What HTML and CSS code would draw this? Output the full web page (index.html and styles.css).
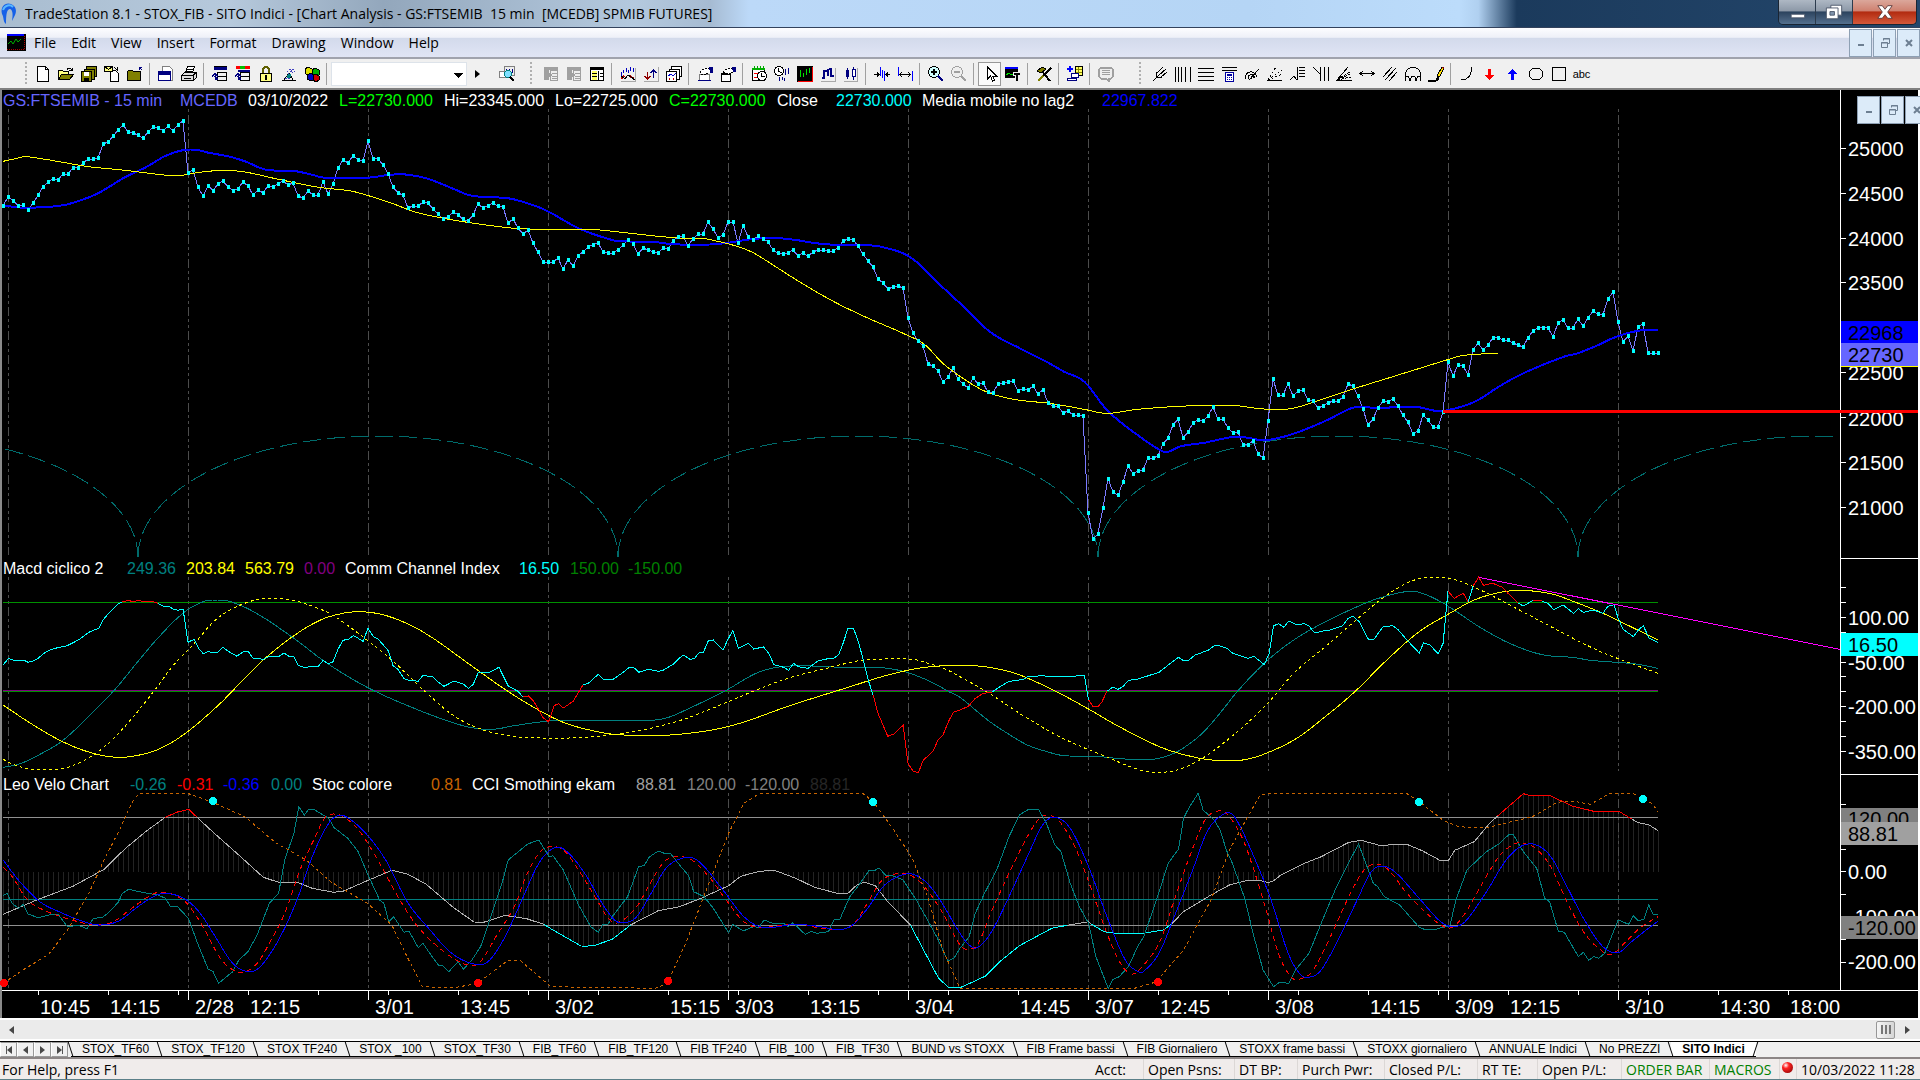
FILE: index.html
```html
<!DOCTYPE html>
<html lang="en">
<head>
<meta charset="utf-8">
<title>TradeStation 8.1 - STOX_FIB - SITO Indici</title>
<link rel="stylesheet" href="styles.css">
</head>
<body>
<svg class="defs" aria-hidden="true">
  <symbol id="new" viewBox="0 0 16 16"><path d="M2.5.5h8l3 3v12h-11z" fill="#fff" stroke="#000"/><path d="M10.5.5v3h3" fill="none" stroke="#000"/></symbol>
  <symbol id="open" viewBox="0 0 16 16"><path d="M.5 13.500v-9h4l1 1h5v3" fill="#ffff80" stroke="#000"/><path d="M.5 13.500l3-5h12l-4 5z" fill="#808000" stroke="#000"/><path d="M9 3.500c2-2 4-1 5 1m0-3v3h-3" fill="none" stroke="#000"/></symbol>
  <symbol id="saveall" viewBox="0 0 16 16"><path d="M5.500.5h10v10h-10z" fill="#808000" stroke="#000"/><path d="M3 3h10v10h-10z" fill="#808000" stroke="#000"/><path d="M.5 5.500h10v10h-10z" fill="#808000" stroke="#000"/><path d="M3 6h5v4h-5z" fill="#fff"/><path d="M3 12h5v3h-5z" fill="#000"/></symbol>
  <symbol id="mail" viewBox="0 0 16 16"><path d="M6.500 4.500h5l3 3v8h-8z" fill="#fff" stroke="#000"/><path d="M.5.5h8v5h-8z" fill="#ffff80" stroke="#000"/><path d="M.5.5l4 3 4-3M10 1l3 3v-3" fill="none" stroke="#000"/></symbol>
  <symbol id="folder" viewBox="0 0 16 16"><path d="M.5 5.500l1-1h4l1 1h7v9h-13z" fill="#808000" stroke="#000"/><path d="M15 4l-3-3m0 3v-3h3" fill="none" stroke="#000080"/></symbol>
  <symbol id="window" viewBox="0 0 16 16"><path d="M4.500.5h7l3 3v11h-10z" fill="#fff" stroke="#808080"/><path d="M.5 5.500h12v9h-12z" fill="#fff" stroke="#000080"/><path d="M1 6h12v3h-12z" fill="#000080"/></symbol>
  <symbol id="print" viewBox="0 0 16 16"><path d="M4.500 6.500l2-6h7l-2 6z" fill="#fff" stroke="#000"/><path d="M.5 9.500l3-3h12v5l-3 3h-12z" fill="#ddd" stroke="#000"/><path d="M1 9.500h11l3-3m-3 3v5M6 3h6M5 5h6M3 12h7" fill="none" stroke="#000"/></symbol>
  <symbol id="sheet" viewBox="0 0 16 16"><path d="M2 1h13v3h-13z" fill="#000080"/><path d="M2 .5h13M5.500 6.500h9v8h-9zM6 10.500h8" fill="none" stroke="#000"/><path d="M6 12.500h-2l-1-3m-3 1l3-3 3 3" fill="none" stroke="#000080" stroke-width="2"/></symbol>
  <symbol id="sheetc" viewBox="0 0 16 16"><path d="M1 0h4v3h-4zm9 0h5v3h-5z" fill="red"/><path d="M5 0h5v3h-5z" fill="#00c000"/><path d="M3 4h12v2h-12z" fill="#000080"/><path d="M5.500 6.500h9v8h-9zM6 10.500h8" fill="none" stroke="#000"/><path d="M6 12.500h-2l-1-3m-3 1l3-3 3 3" fill="none" stroke="#000080" stroke-width="2"/></symbol>
  <symbol id="lock" viewBox="0 0 16 16"><path d="M5 8v-5q3-4 6 0v5" fill="none" stroke="#606000" stroke-width="2"/><path d="M2.500 7.500h11v8h-11z" fill="#ffff80" stroke="#000"/><path d="M7 9h2v5h-2z"/></symbol>
  <symbol id="sat" viewBox="0 0 16 16"><path d="M1 14.500h14M3 14l5-7 4 7M6 11h5" fill="none" stroke="#000"/><path d="M6 6l5-4m-4 6l7-6m-6 7l6-4M4 12l5 1" stroke="#4040c0" stroke-dasharray="2 1"/><circle cx="8" cy="10" r="2" fill="#008080"/></symbol>
  <symbol id="cubes" viewBox="0 0 16 16"><path d="M1 3l3-2 4 2v5l-4 2-3-3z" fill="#e0e000" stroke="#000"/><path d="M8 4l3-2 4 2v5l-4 1-3-2z" fill="#00b000" stroke="#000"/><path d="M3 9l4-2 3 2v5l-3 1-4-2z" fill="#0000c0" stroke="#000"/><path d="M9 9l3-1 3 2v4l-3 2-3-2z" fill="#d00000" stroke="#000"/></symbol>
  <symbol id="find" viewBox="0 0 16 16"><path d="M5.500.5h10v9h-10z" fill="#eee" stroke="#808080"/><path d="M.5 5.500h7v6h-7z" fill="#fff" stroke="#808080"/><path d="M7 3v3m3-3v3m3-3v4" stroke="#000080"/><circle cx="9" cy="8" r="3.500" fill="#80e0ff" stroke="#008080"/><path d="M11 11l4 4" stroke="#000" stroke-width="2"/></symbol>
  <symbol id="gbox" viewBox="0 0 16 16"><path d="M1 1h14v3h-14zM1 4h5v10h-5z" fill="#a0a0a0"/><path d="M7.500 4.500h7v10h-7z" fill="#eee" stroke="#a0a0a0"/><path d="M4 6l4 3-4 3" fill="none" stroke="#a0a0a0" stroke-width="2"/><path d="M9 7.500h5M9 10.500h5M9 12.500h5" stroke="#a0a0a0"/></symbol>
  <symbol id="table" viewBox="0 0 16 16"><path d="M1.500 1.500h13v13h-13z" fill="#fff" stroke="#000"/><path d="M2 2h12v2h-12z"/><path d="M3 5h5v9h-5z" fill="#ffff60"/><path d="M3 7.500h5M3 10.500h5M9.500 5v9M11 7.500h3M11 10.500h3" stroke="#000"/></symbol>
  <symbol id="wave" viewBox="0 0 16 16"><path d="M15.500 2v13.500H1" fill="none" stroke="#aaa"/><path d="M1.500 6v4M3.500 4v3M6.500 2v4M8.500 4v3M10.500 1v4M13.500 2v4" stroke="#0000c0"/><path d="M1 13l3-3M10 10l4 3" stroke="#c00000" stroke-width="2"/><path d="M1 10l4 3 3-4 3 2 4 3" fill="none" stroke="#000"/></symbol>
  <symbol id="updn" viewBox="0 0 16 16"><path d="M15.500 1v14.500H1" fill="none" stroke="#aaa"/><path d="M4.500 6v7m-3-3l3 3 3-3" fill="none" stroke="#900000"/><path d="M10.500 12v-8m-3 3l3-3 3 3" fill="none" stroke="#000080"/></symbol>
  <symbol id="stack" viewBox="0 0 16 16"><path d="M5.500.5h10v10h-10z" fill="#fff" stroke="#000"/><path d="M3.500 3.500h10v10h-10z" fill="#fff" stroke="#000"/><path d="M.5 5.500h10v10h-10z" fill="#fff" stroke="#000"/><path d="M2 10l3-2 2 2 3-3" fill="none" stroke="#0000d0"/><path d="M3.500 14v-2m4 0v2" stroke="#c00000"/></symbol>
  <symbol id="hand" viewBox="0 0 16 16"><path d="M2.500 8.500h10v6h-10z" fill="#fff" stroke="#808080"/><path d="M3 6l5-4h5v5l-4 1h-5z" fill="#fff" stroke="#000" stroke-dasharray="2 1"/><path d="M12 1h4v6h-3z" fill="#000080"/><path d="M1 14h13v1h-13z" fill="#000080"/></symbol>
  <symbol id="hand2" viewBox="0 0 16 16"><path d="M1.500 7.500h9v8h-9z" fill="#fff" stroke="#000"/><path d="M2 7h9v2h-9z"/><path d="M3 6l5-4h5v4l-4 2z" fill="#fff" stroke="#000" stroke-dasharray="2 1"/><path d="M12 1h4v5h-3z" fill="#000080"/></symbol>
  <symbol id="cal" viewBox="0 0 16 16"><path d="M1.500 3.500h12v11h-12z" fill="#fff" stroke="#000"/><path d="M1 2h13v2h-13z" fill="#00b000"/><path d="M3.500 0v3M6.500 0v3M9.500 0v3M12.500 0v3" stroke="#0a0"/><path d="M3 7h3v4h-3" fill="none" stroke="red"/><circle cx="11" cy="10" r="4.500" fill="#fff" stroke="#000"/><path d="M10.500 7v3h3" fill="none" stroke="#000"/></symbol>
  <symbol id="clock" viewBox="0 0 16 16"><circle cx="5" cy="5" r="4.500" fill="#fff" stroke="#000"/><path d="M4.500 2v3l3 2" fill="none" stroke="#000"/><path d="M11.500 3v6M14.500 2v6M5.500 11v4M8.500 11v3M10.500 12v3" stroke="#000080"/></symbol>
  <symbol id="chart" viewBox="0 0 16 16"><path d="M0 0h16v16h-16z"/><path d="M3.500 4v7M6.500 7v4M9.500 3v6M12.500 2v5" stroke="#00e000"/><path d="M15.500 1v14.500H1" fill="none" stroke="red"/></symbol>
  <symbol id="bars" viewBox="0 0 16 16"><path d="M15.500 2v13.500H1" fill="none" stroke="#aaa"/><path d="M4 4v9M2 12h2m0-7h3M8 3v7M11 2v9M9 3h2m0 7h3" fill="none" stroke="#000080" stroke-width="2"/></symbol>
  <symbol id="candle" viewBox="0 0 16 16"><path d="M14.500 2v13.500H1" fill="none" stroke="#aaa"/><path d="M3 4h3v7h-3z" fill="#000080"/><path d="M4.500 2v11M10.500 1v13" stroke="#000080"/><path d="M9.500 3.500h3v7h-3z" fill="#fff" stroke="#000080"/></symbol>
  <symbol id="narrow" viewBox="0 0 16 16"><path d="M0 8.500h5m-2-2l2 2-2 2M16 8.500h-4m2-2l-2 2 2 2" fill="none" stroke="#000"/><path d="M6.500 1v9M8.500 4v8M10.500 5v10" stroke="#0000ff"/></symbol>
  <symbol id="widen" viewBox="0 0 16 16"><path d="M3 8.500h10M5 6l-2 2.500 2 2.500M11 6l2 2.500-2 2.500" fill="none" stroke="#000"/><path d="M1.500 1v9M15.500 5v10" stroke="#0000ff"/></symbol>
  <symbol id="zin" viewBox="0 0 16 16"><circle cx="6" cy="6" r="5.500" fill="#d0ffff" stroke="#000"/><path d="M3 6h6M6 3v6" stroke="#000" stroke-width="2"/><path d="M10 10l5 5" stroke="#000080" stroke-width="2"/></symbol>
  <symbol id="zout" viewBox="0 0 16 16"><circle cx="6" cy="6" r="5.500" fill="#eee" stroke="#a0a0a0"/><path d="M3 6h6M10 10l5 5" stroke="#a0a0a0" stroke-width="2"/></symbol>
  <symbol id="arrow" viewBox="0 0 16 16"><path d="M5.500 1v12l3-3 2 5 2-1-2-4h4z" fill="#fff" stroke="#000"/></symbol>
  <symbol id="text" viewBox="0 0 16 16"><path d="M0 1h13v11h-13z"/><path d="M0 1h13v2h-13z" fill="#00f"/><path d="M1 9l3-2 2 2 3-1" fill="none" stroke="#0d0"/><path d="M8.500 6.500h7v3h-2v6h-3v-6h-2z" stroke="#eee"/></symbol>
  <symbol id="tools" viewBox="0 0 16 16"><path d="M5 4l9 11" stroke="#000" stroke-width="2"/><path d="M1 5l5-4 4 2-5 4z" fill="#808000" stroke="#000"/><path d="M15 2l-8 8" stroke="#000" stroke-width="2"/><path d="M7 10l-5 5" stroke="#808000" stroke-width="2"/></symbol>
  <symbol id="add" viewBox="0 0 16 16"><path d="M8.500.5h7v9h-7z" fill="#ffff60" stroke="#000"/><path d="M9 3.500h6M9 6.500h6M11.500 1v8" stroke="#880"/><path d="M0 3h6M3 0v6" stroke="#00f" stroke-width="2"/><path d="M4.500 7.500h7v4h-7zM.5 12.500h9v2h-9z" fill="#fff" stroke="#000080"/></symbol>
  <symbol id="note" viewBox="0 0 16 16"><path d="M3 1.500h10l2 2v7l-2 2h-2v3l-3-3h-5l-2-2v-7z" fill="#eee" stroke="#a0a0a0" stroke-width="2"/><path d="M4 4.500h8M4 6.500h8M4 8.500h8" stroke="#a0a0a0"/></symbol>
  <symbol id="fork" viewBox="0 0 16 16"><path d="M1 15l5-5M4 6l1 5 5 0M5 7l6-6M6 10l8-7M9 11l6-5" fill="none" stroke="#000"/></symbol>
  <symbol id="vlines" viewBox="0 0 16 16"><path d="M.5 1v15M3.500 1v15M6.500 1v15M10.500 1v15M15.500 1v15" stroke="#000"/></symbol>
  <symbol id="hlines" viewBox="0 0 16 16"><path d="M0 2.500h16M0 6.500h16M0 10.500h16M0 14.500h16" stroke="#000"/></symbol>
  <symbol id="calc" viewBox="0 0 16 16"><path d="M1 1.500h15M1 4.500h15" stroke="#000"/><path d="M4.500 6.500h8v9h-8z" fill="#fff" stroke="#0000a0"/><path d="M6 8h5v2h-5z" fill="#0000a0"/><path d="M6 11.500h1m1 0h1m1 0h1M6 13.500h1m1 0h1m1 0h1" stroke="#0000a0"/></symbol>
  <symbol id="arcs" viewBox="0 0 16 16"><path d="M1 13c0-8 9-10 12-2M4 13c0-5 5-6 7-1M7 13c0-3 2-3 3-1M5 14l10-11" fill="none" stroke="#000"/></symbol>
  <symbol id="fan" viewBox="0 0 16 16"><path d="M0 14.500h15" stroke="#000"/><path d="M1 14l8-13M1 14l14-10M1 14l14-6" stroke="#000" stroke-dasharray="2 2"/></symbol>
  <symbol id="retr" viewBox="0 0 16 16"><path d="M0 14l4-4 3 4M7.500 14v-13M9 1.500h6M9 4.500h6M9 7.500h6M9 10.500h6" fill="none" stroke="#000"/></symbol>
  <symbol id="tzone" viewBox="0 0 16 16"><path d="M0 1l7 7M7.500 1v14M11.500 1v14M15.500 1v14" stroke="#000"/></symbol>
  <symbol id="gann" viewBox="0 0 16 16"><path d="M0 14.500h16M1 14l11-13" stroke="#000"/><path d="M1 14l13-6M1 14l14-9M1 14l14-3" stroke="#000" stroke-dasharray="3 1"/></symbol>
  <symbol id="hext" viewBox="0 0 16 16"><path d="M2 7.500h12M4 5l-3 2.500 3 2.500M12 5l3 2.500-3 2.500" fill="none" stroke="#000"/></symbol>
  <symbol id="chan" viewBox="0 0 16 16"><path d="M1 11l9-10M3 14l11-12M7 15l8-9" stroke="#000"/></symbol>
  <symbol id="cycle" viewBox="0 0 16 16"><path d="M.5 15v-7c1-9 14-9 15 0v7M1 11q3-2 4 4 1-5 3-5 3 0 3 5 1-6 4-4" fill="none" stroke="#000"/></symbol>
  <symbol id="pencil" viewBox="0 0 16 16"><path d="M0 14.500h8l3-2" fill="none" stroke="#000" stroke-width="2"/><path d="M9 12l1-4 4-7 2 1-4 8z" fill="#ffe000" stroke="#000"/><path d="M13 1h3v3z" fill="#800000"/></symbol>
  <symbol id="arc" viewBox="0 0 16 16"><path d="M2 13.500c7 1 10-4 11-12" fill="none" stroke="#000"/></symbol>
  <symbol id="dn" viewBox="0 0 16 16"><path d="M6 3h3v6h3l-4.500 5-4.500-5h3z" fill="red"/></symbol>
  <symbol id="up" viewBox="0 0 16 16"><path d="M6 14h3v-6h3l-4.500-5-4.500 5h3z" fill="#00f"/></symbol>
  <symbol id="circ" viewBox="0 0 16 16"><ellipse cx="8" cy="8" rx="7" ry="6" fill="none" stroke="#000"/></symbol>
  <symbol id="rect" viewBox="0 0 16 16"><path d="M1.500 1.500h13v13h-13z" fill="none" stroke="#000"/></symbol>
  <symbol id="min" viewBox="0 0 16 16"><path d="M5 9h6v2h-6z" fill="#6d7f92"/></symbol>
  <symbol id="rest" viewBox="0 0 16 16"><path d="M6.500 5.500v-2h6v5h-2M6 4h7" fill="none" stroke="#6d7f92"/><path d="M4.500 7.500h6v5h-6zM4 8h7" fill="none" stroke="#6d7f92"/></symbol>
  <symbol id="close" viewBox="0 0 16 16"><path d="M5 5l6 6M11 5l-6 6" stroke="#6d7f92" stroke-width="2"/></symbol>
</svg>

<header class="titlebar">
  <svg class="logo" viewBox="0 0 18 24"><path d="M2 12C0 4 6 0 11 2c5 2 6 7 4 11l-3 6c1-6 1-11-2-12-3 0-4 5-4 15-3-2-2-7-4-10z" fill="#1560e8"/><path d="M3 8c2-5 7-6 10-3" fill="none" stroke="#59b8ff" stroke-width="2"/></svg>
  <h1 class="title">TradeStation 8.1 - STOX_FIB - SITO Indici - [Chart Analysis - GS:FTSEMIB&nbsp; 15 min&nbsp; [MCEDB] SPMIB FUTURES]</h1>
  <div class="wincontrols">
    <button class="wc" aria-label="Minimize"><svg viewBox="0 0 20 20"><path d="M3.500 12.500h15v4h-15z" fill="#fff" stroke="#4a5568"/></svg></button>
    <button class="wc" aria-label="Restore"><svg viewBox="0 0 20 20"><path d="M6.500 2.500h12v11h-12z" fill="#fff" stroke="#4a5568"/><path d="M1.500 5.500h13v12h-13z" fill="#fff" stroke="#4a5568"/><path d="M5.500 9.500h5v4h-5z" fill="#8095ad" stroke="#4a5568"/></svg></button>
    <button class="wc wc-close" aria-label="Close"><svg viewBox="0 0 20 20"><path d="M2 3h5l3 4 3-4h5l-5 7 5 7h-5l-3-4-3 4h-5l5-7z" fill="#fff" stroke="#5a3a3a"/></svg></button>
  </div>
</header>

<nav class="menubar">
  <svg class="docicon" viewBox="0 0 19 17"><path d="M0 0h19v17h-19z"/><path d="M0 0h17v2h-17z" fill="#00f"/><path d="M1 10l3-3 2 3 3-5 2 3 3-3" fill="none" stroke="#0a0"/><path d="M17.500 2v13.500H0" fill="none" stroke="#a00" stroke-dasharray="1 1"/></svg>
  <button class="menu">File</button><button class="menu">Edit</button><button class="menu">View</button><button class="menu">Insert</button><button class="menu">Format</button><button class="menu">Drawing</button><button class="menu">Window</button><button class="menu">Help</button>
  <div class="mdi">
    <button aria-label="Minimize chart"><svg><use href="#min"/></svg></button><button aria-label="Restore chart"><svg><use href="#rest"/></svg></button><button aria-label="Close chart"><svg><use href="#close"/></svg></button>
  </div>
</nav>

<div class="toolbar">
  <i class="grip first"></i>
  <button><svg><use href="#new"/></svg></button><button><svg><use href="#open"/></svg></button><button><svg><use href="#saveall"/></svg></button><button><svg><use href="#mail"/></svg></button><button><svg><use href="#folder"/></svg></button><i class="sep"></i>
  <button><svg><use href="#window"/></svg></button><button><svg><use href="#print"/></svg></button><i class="sep"></i>
  <button><svg><use href="#sheet"/></svg></button><button><svg><use href="#sheetc"/></svg></button><button><svg><use href="#lock"/></svg></button><button><svg><use href="#sat"/></svg></button><button><svg><use href="#cubes"/></svg></button><i class="sep"></i>
  <select class="symbol" aria-label="Symbol"><option></option></select>
  <button class="go" aria-label="Go"><i class="tri"></i></button>
  <button class="wide"><svg><use href="#find"/></svg></button><i class="grip mid"></i>
  <button><svg><use href="#gbox"/></svg></button><button><svg><use href="#gbox"/></svg></button><button><svg><use href="#table"/></svg></button><i class="sep"></i>
  <button><svg><use href="#wave"/></svg></button><button><svg><use href="#updn"/></svg></button><button><svg><use href="#stack"/></svg></button><i class="sep"></i>
  <button><svg><use href="#hand"/></svg></button><button><svg><use href="#hand2"/></svg></button><i class="sep"></i>
  <button><svg><use href="#cal"/></svg></button><button><svg><use href="#clock"/></svg></button><button><svg><use href="#chart"/></svg></button><button><svg><use href="#bars"/></svg></button><button><svg><use href="#candle"/></svg></button><i class="sep"></i>
  <button><svg><use href="#narrow"/></svg></button><button><svg><use href="#widen"/></svg></button><i class="sep"></i>
  <button><svg><use href="#zin"/></svg></button><button><svg><use href="#zout"/></svg></button><i class="sep"></i>
  <button class="pressed"><svg><use href="#arrow"/></svg></button><button><svg><use href="#text"/></svg></button><i class="sep"></i>
  <button><svg><use href="#tools"/></svg></button><i class="sep"></i>
  <button><svg><use href="#add"/></svg></button><i class="sep"></i>
  <button><svg><use href="#note"/></svg></button><i class="grip last"></i>
  <button><svg><use href="#fork"/></svg></button><button><svg><use href="#vlines"/></svg></button><button><svg><use href="#hlines"/></svg></button><button><svg><use href="#calc"/></svg></button><button><svg><use href="#arcs"/></svg></button><button><svg><use href="#fan"/></svg></button><button><svg><use href="#retr"/></svg></button><button><svg><use href="#tzone"/></svg></button><button><svg><use href="#gann"/></svg></button><button><svg><use href="#hext"/></svg></button><button><svg><use href="#chan"/></svg></button><button><svg><use href="#cycle"/></svg></button><button><svg><use href="#pencil"/></svg></button><i class="sep"></i>
  <button><svg><use href="#arc"/></svg></button><button><svg><use href="#dn"/></svg></button><button><svg><use href="#up"/></svg></button><button><svg><use href="#circ"/></svg></button><button><svg><use href="#rect"/></svg></button><button class="abc">abc</button>
</div>

<main class="chart">
  <section class="pane">
    <div class="legend legend-price">
      <span class="c-sym">GS:FTSEMIB - 15 min</span><span class="c-sym">MCEDB</span><span>03/10/2022</span><span class="c-lime">L=22730.000</span><span>Hi=23345.000</span><span>Lo=22725.000</span><span class="c-lime">C=22730.000</span><span>Close</span><span class="c-cyan">22730.000</span><span>Media mobile no lag2</span><span class="c-blue">22967.822</span>
    </div>
    <svg class="plot" id="price"></svg>
  </section>
  <section class="pane">
    <div class="legend legend-macd">
      <span>Macd ciclico 2</span><span class="c-teal">249.36</span><span class="c-yellow">203.84</span><span class="c-yellow">563.79</span><span class="c-purple">0.00</span><span>Comm Channel Index</span><span class="c-cyan">16.50</span><span class="c-green">150.00</span><span class="c-green">-150.00</span>
    </div>
    <svg class="plot" id="macd"></svg>
  </section>
  <section class="pane">
    <div class="legend legend-velo">
      <span>Leo Velo Chart</span><span class="c-teal">-0.26</span><span class="c-red">-0.31</span><span class="c-blue">-0.36</span><span class="c-teal">0.00</span><span>Stoc colore</span><span class="c-orange">0.81</span><span>CCI Smothing ekam</span><span class="c-silver">88.81</span><span class="c-gray">120.00</span><span class="c-gray">-120.00</span><span class="c-dark">88.81</span>
    </div>
    <svg class="plot" id="velo"></svg>
  </section>
  <svg class="axis" id="axis"></svg>
  <svg class="times" id="times"></svg>
  <div class="mdi floating">
    <button aria-label="Minimize window"><svg><use href="#min"/></svg></button><button aria-label="Restore window"><svg><use href="#rest"/></svg></button><button aria-label="Close window"><svg><use href="#close"/></svg></button>
  </div>
</main>

<div class="scrollbar">
  <button class="sb-arrow" aria-label="Scroll left"><i class="tri left"></i></button>
  <button class="thumb" aria-label="Scroll position"><i></i><i></i><i></i></button>
  <button class="sb-arrow" aria-label="Scroll right"><i class="tri"></i></button>
</div>

<div class="tabs">
  <div class="tabnav"><button aria-label="First"><i class="bar"></i><i class="tri left"></i></button><button aria-label="Previous"><i class="tri left"></i></button><button aria-label="Next"><i class="tri"></i></button><button aria-label="Last"><i class="tri"></i><i class="bar"></i></button></div>
  <button class="tab">STOX_TF60</button><button class="tab">STOX_TF120</button><button class="tab">STOX TF240</button><button class="tab">STOX _100</button><button class="tab">STOX_TF30</button><button class="tab">FIB_TF60</button><button class="tab">FIB_TF120</button><button class="tab">FIB TF240</button><button class="tab">FIB_100</button><button class="tab">FIB_TF30</button><button class="tab">BUND vs STOXX</button><button class="tab">FIB Frame bassi</button><button class="tab">FIB Giornaliero</button><button class="tab">STOXX frame bassi</button><button class="tab">STOXX giornaliero</button><button class="tab">ANNUALE Indici</button><button class="tab">No PREZZI</button><button class="tab active">SITO Indici</button>
</div>

<footer class="status">
  <span class="help">For Help, press F1</span>
  <span class="acct">Acct:</span><span>Open Psns:</span><span>DT BP:</span><span>Purch Pwr:</span><span>Closed P/L:</span><span>RT TE:</span><span>Open P/L:</span><span class="c-green">ORDER BAR</span><span class="c-green">MACROS</span><span><i class="led"></i></span><span>10/03/2022 11:28</span>
</footer>
<script src="script.js"></script>
</body>
</html>
```
FILE: styles.css
```css
* { box-sizing: border-box; }
body { margin: 0; min-height: 100vh; display: flex; flex-direction: column; overflow: hidden; background: #f0eceb; color: #000; font-family: "Open Sans", "Noto Sans", sans-serif; font-size: 14px; }
button { font: inherit; color: inherit; margin: 0; padding: 0; border: 0; background: none; }
.defs { display: none; }

.titlebar { height: 28px; display: flex; align-items: center; gap: 7px; padding-right: 3px; border-bottom: 1px solid #33425c; background: linear-gradient(90deg, #a9bdd0 0, #b6c9dc 12%, #93a7bc 20%, #b4c9de 33%, #a6bbd2 37%, #bcd9f8 39%, #b5d5f5 65%, #bcdcfb 76%, #b0d0f0 77%, #1b3a5c 79%, #24476c 100%); }
.logo { width: 18px; height: 24px; }
.title { flex: 1; margin: 0; font-size: 14px; font-weight: 400; line-height: 24px; white-space: nowrap; }
.wincontrols { display: flex; align-self: flex-start; height: 25px; border: 1px solid #1a2533; border-top: 0; border-radius: 0 0 5px 5px; overflow: hidden; }
.wc { width: 37px; display: flex; align-items: center; justify-content: center; border-right: 1px solid #2c3b4d; background: linear-gradient(#aeb8c4 0, #8d99a8 45%, #2c435e 50%, #55708e 100%); }
.wc svg { width: 18px; height: 18px; }
.wc-close { width: 63px; border: 0; background: linear-gradient(#dba79b 0, #cf8170 45%, #b22b10 50%, #d4583a 100%); }

.menubar { height: 31px; display: flex; align-items: center; padding-left: 7px; border-bottom: 2px solid #a0a3ad; background: linear-gradient(#fdfdff 0, #eef0f8 32%, #d3daeb 36%, #e0e5f5 100%); }
.docicon { width: 19px; height: 17px; margin-right: 1px; }
.menu { padding: 0 8px 0 7px; font-size: 14px; line-height: 24px; }
.mdi { display: flex; gap: 1px; height: 28px; }
.menubar .mdi { margin-left: auto; }
.mdi button { width: 23px; display: flex; align-items: center; justify-content: center; border: 1px solid #8ea0b4; background: #dcebf9; }
.mdi svg { width: 16px; height: 16px; }
.floating { position: absolute; top: 6px; left: 1855px; }

.toolbar { height: 31px; display: flex; align-items: center; background: #f0f0f0; border-bottom: 2px solid #808080; }
.toolbar button { width: 23px; height: 24px; flex: none; display: flex; align-items: center; justify-content: center; }
.toolbar svg { width: 16px; height: 16px; shape-rendering: crispEdges; }
.toolbar .pressed { border: 1px solid #999; background: #fafafa; }
.toolbar .abc { font-family: "Liberation Sans", Arial, sans-serif; font-size: 11px; }
.toolbar .wide { width: 40px; }
.toolbar .go { width: 20px; }
.sep { width: 8px; height: 22px; flex: none; background: linear-gradient(#a0a0a0, #a0a0a0) 3px 0 / 1px 100% no-repeat; }
.grip { width: 9px; height: 24px; flex: none; background: linear-gradient(#b0b0b0 2px, transparent 2px) 3px 0 / 2px 4px repeat-y; }
.grip.first { margin-left: 22px; }
.grip.mid { margin-right: 3px; }
.grip.last { margin: 0 3px 0 19px; }
.symbol { width: 136px; height: 24px; border: 1px solid #dde3ea; padding: 0; appearance: none; background: linear-gradient(#000, #000) 122px 10px / 9px 1px no-repeat, linear-gradient(#000, #000) 123px 11px / 7px 1px no-repeat, linear-gradient(#000, #000) 124px 12px / 5px 1px no-repeat, linear-gradient(#000, #000) 125px 13px / 3px 1px no-repeat, linear-gradient(#000, #000) 126px 14px / 1px 1px no-repeat, #fff; }
.tri { display: block; border: 4px solid transparent; border-left: 5px solid #000; border-right: 0; }
.tri.left { border-right: 5px solid #000; border-left: 0; }

.chart { position: relative; display: grid; grid-template-columns: minmax(0, 1fr) 78px; grid-template-rows: 468px 216px 216px 28px; background: #000; color: #fff; border-left: 2px solid #8a8a8a; border-right: 2px solid #fff; font-family: "Liberation Sans", Arial, sans-serif; }
.pane { grid-column: 1; display: flex; flex-direction: column; }
.legend { height: 19px; padding-left: 1px; display: grid; font-size: 16px; line-height: 22px; white-space: nowrap; }
.legend-price { grid-template-columns: 177px 68px 91px 105px 111px 114px 108px 59px 86px 180px auto; }
.legend-macd { grid-template-columns: 124px 59px 59px 59px 41px 174px 51px 58px auto; }
.legend-velo { grid-template-columns: 127px 47px 46px 48px 41px 119px 41px 164px 51px 58px 65px auto; }
.plot { flex: 1; width: 100%; min-height: 0; overflow: visible; }
.axis { grid-column: 2; grid-row: 1 / 4; width: 100%; height: 100%; }
.times { grid-column: 1 / 3; grid-row: 4; width: 100%; height: 28px; }
.axis text, .times text { font-size: 20px; fill: #fff; }
.axis .on-light { fill: #000; }
.plot, .axis, .times { shape-rendering: crispEdges; fill: none; }
.c-sym { color: #6666ff; } .c-lime { color: #0f0; } .c-cyan { color: #0ff; } .c-blue { color: #00f; } .c-teal { color: #008080; }
.c-yellow { color: #ff0; } .c-purple { color: #800080; } .c-green { color: #008000; } .c-red { color: #f00; } .c-orange { color: #c86400; }
.c-silver { color: #a0a0a0; } .c-gray { color: #808080; } .c-dark { color: #262626; }

.scrollbar { height: 23px; display: flex; align-items: center; padding: 0 5px 0 3px; border-top: 2px solid #fff; border-bottom: 2px solid #fff; background: #ebebeb; }
.sb-arrow { width: 16px; height: 17px; display: flex; align-items: center; justify-content: center; }
.scrollbar .tri, .tabnav .tri { filter: opacity(70%); }
.thumb { width: 19px; height: 18px; margin: 0 4px 0 auto; display: flex; gap: 2px; align-items: center; justify-content: center; border: 1px solid #979797; border-radius: 2px; background: linear-gradient(90deg, #f5f5f5, #d6d6d6); }
.thumb i { width: 2px; height: 9px; background: #777; }

.tabs { height: 18px; display: flex; border-top: 1px solid #000; border-bottom: 2px solid #8c8686; background: #f0f0f0; font-family: "Liberation Sans", Arial, sans-serif; font-size: 12px; overflow: hidden; }
.tabnav { display: flex; width: 71px; flex: none; }
.tabnav button { width: 17px; display: flex; align-items: center; justify-content: center; border: 1px solid #999; border-left-color: #fff; }
.bar { width: 1px; height: 8px; background: #555; }
.tab { position: relative; flex: none; padding: 0 11px; line-height: 15px; border-bottom: 1px solid #000; }
.tab::before, .tab.active::after { content: ""; position: absolute; top: 0; left: -1px; height: 100%; border-left: 1px solid #000; transform: skewX(18deg); }
.tab.active { font-weight: 700; background: #fff; }
.tab.active::after { left: auto; right: 0; transform: skewX(-18deg); }

.status { height: 21px; display: flex; font-size: 14px; line-height: 22px; white-space: nowrap; border-bottom: 1px solid #5b7f88; overflow: hidden; }
.status span { flex: none; padding-left: 4px; border-left: 1px solid #dcd8d6; }
.status .help { flex: 1; padding-left: 2px; border: 0; }
.status .acct { width: 52px; border: 0; }
.status span:nth-child(3) { width: 91px; } .status span:nth-child(4) { width: 63px; } .status span:nth-child(5) { width: 87px; }
.status span:nth-child(6) { width: 93px; } .status span:nth-child(7) { width: 60px; } .status span:nth-child(8) { width: 84px; }
.status span:nth-child(9) { width: 88px; } .status span:nth-child(10) { width: 70px; } .status span:nth-child(11) { width: 17px; padding-left: 2px; } .status span:nth-child(12) { width: 124px; }
.led { display: block; width: 11px; height: 11px; margin-top: 3px; border-radius: 50%; background: radial-gradient(circle at 35% 30%, #fff 0, #f22 30%, #700 100%); }
```
FILE: script.js
```js
// Series are recorded on two sheets (0 = left half, 960 = right half),
// 49 horizontal units per 30px and 3 vertical units per pixel.
const NS = "http://www.w3.org/2000/svg";
const X = (sheet, u) => sheet + u * 30 / 49;
const parse = s => s.trim().split(/\s+/).map(p => p.split(",").map(Number));

function el(parent, tag, attrs, text) {
  const n = document.createElementNS(NS, tag);
  for (const k in attrs) n.setAttribute(k, attrs[k]);
  if (text !== undefined) n.textContent = text;
  parent.appendChild(n);
  return n;
}
const layer = (id, dx, dy) => el(document.getElementById(id), "g", { transform: `translate(${dx} ${dy})` });

function points(top, left, right) {
  const a = left ? parse(left).map(([x, y]) => [X(0, x), top + y / 3]) : [];
  const b = right ? parse(right).map(([x, y]) => [X(960, x), top + y / 3]) : [];
  if (a.length && b.length && b[0][0] <= a[a.length - 1][0] + 1) b.shift();
  return a.concat(b);
}
function line(g, pts, stroke, width = 1, dash = "") {
  el(g, "polyline", { points: pts.map(p => p.map(v => v.toFixed(1)).join()).join(" "), stroke, "stroke-width": width, "stroke-dasharray": dash });
}
function curve(g, pts, stroke, width = 1, dash = "") {
  const out = [];
  for (let i = 0; i < pts.length - 1; i++) {
    const p0 = pts[i - 1] || pts[i], p1 = pts[i], p2 = pts[i + 1], p3 = pts[i + 2] || p2;
    const m1 = (p2[1] - p0[1]) / (p2[0] - p0[0] || 1), m2 = (p3[1] - p1[1]) / (p3[0] - p1[0] || 1), h = p2[0] - p1[0];
    for (let k = 0; k < 6; k++) {
      const t = k / 6, t2 = t * t, t3 = t2 * t;
      out.push([p1[0] + h * t, (2 * t3 - 3 * t2 + 1) * p1[1] + (t3 - 2 * t2 + t) * h * m1 + (3 * t2 - 2 * t3) * p2[1] + (t3 - t2) * h * m2]);
    }
  }
  out.push(pts[pts.length - 1]);
  line(g, out, stroke, width, dash);
}
const hline = (g, y, stroke, x1 = 3, x2 = 1658, w = 1) => el(g, "path", { d: `M${x1} ${y}H${x2}`, stroke, "stroke-width": w });
const days = [8.5, 188.5, 368.5, 548.5, 728.5, 908.5, 1088.5, 1268.5, 1448.5, 1618.5];
const dayLines = (g, y1, y2) => days.forEach(x => el(g, "path", { d: `M${x} ${y1}V${y2}`, stroke: "#4c4c4c", "stroke-dasharray": "3 3 9 3 3 3" }));

// ---------- price ----------
let g = layer("price", -2, -109);
dayLines(g, 109, 555);
for (const c of [-102, 378, 858, 1338, 1818]) {
  const a = c < 0 ? `M5 449A240 121 0 0 1 138 557` : c > 1800 ? `M1578 557A240 121 0 0 1 1818 436H1839` : `M${c - 240} 557A240 121 0 0 1 ${c + 240} 557`;
  el(g, "path", { d: a, stroke: "#006c6c", "stroke-dasharray": "18 6" });
}
const close = `348 321 332 347 345 360 340 316 291 275 267 269 252 252 233 233 219 207 207 205 162 156 139 120 104 126 129 135 145 126 110 113 122 108 122 104 93 248 239 291 318 287 302 282 273 291 302 297 275 288 315 299 309 287 291 281 272 285 279 318 324 303 315 315 275 312 282 234 209 219 197 209 212 153 206 207 224 251 291 309 315 354 348 348 336 339 357 372 388 380 366 374 388 393 375 342 354 347 339 348 351 399 387 414 432 420 459 487 516 516 516 504 537 509 528 497 486 470 464 458 486 489 489 480 464 450 462 492 474 480 485 489 474 477 453 440 438 467 447 432 432 396 417 443 435 396 396 460 407 440 450 438 446 455 480 489 492 489 480 498 489 498 486 480 480 483 483 474 453 447 449 468 492 513 531 567 579 597 591 588 594 684 729 753 768 822 828 843 876 861 833 867
882 894 863 882 879 906 909 882 879 876 873 902 896 900 888 912 899 939 948 948 969 963 975 975 978 1269 1347 1331 1253 1166 1206 1216 1176 1127 1151 1143 1140 1104 1104 1098 1062 1044 1005 987 1044 1026 999 990 993 978 951 987 987 1014 1028 1026 1064 1064 1052 1092 1104 993 867 915 915 881 918 903 900 930 933 954 948 939 933 933 921 882 888 918 957 1005 987 954 933 936 927 948 976 996 1032 1023 976 990 1011 1011 966 816 858 825 827 855 780 759 780 765 743 743 750 750 759 765 771 743 723 713 713 713 741 699 690 714 714 687 708 684 663 672 674 627 606 696 756 738 783 711 702 789 789 789`
  .split(/\s+/).map((v, i) => [3 + 5 * i, 90 + v / 3]);
line(g, close, "#7a7aff");
curve(g, points(90, "5,348 21,350 45,354 70,351 95,348 120,338 160,310 200,266 240,230 270,198 300,180 322,180 340,188 370,198 400,214 430,237 450,242 480,243 505,252 530,263 600,263 640,254 665,254 700,267 740,296 770,317 830,325 865,342 896,365 945,415 1000,450 1020,454 1070,456 1090,461 1130,465 1165,463 1190,458 1230,447 1265,444 1300,450 1330,459 1370,465 1400,464 1435,469 1475,490 1500,520 1530,575 1568,640",
  "0,640 50,727 100,777 140,814 170,845 203,875 240,960 290,1035 333,1086 345,1082 360,1069 400,1058 445,1041 470,1043 490,1050 510,1048 550,1028 600,990 640,954 660,952 690,954 720,950 750,952 775,962 790,963 840,936 880,890 920,850 985,801 1010,789 1040,767 1075,738 1115,720 1140,720"), "#0000ff", 2);
curve(g, points(90, "5,214 30,204 40,200 60,204 100,216 140,229 200,240 280,257 300,255 330,246 365,241 400,246 450,266 520,292 570,302 600,316 640,340 680,367 740,390 830,413 880,418 965,418 1000,424 1100,443 1150,446 1170,453 1200,467 1230,488 1260,522 1310,580 1360,633 1410,678 1480,734 1510,763 1540,820 1568,859",
  "0,859 40,903 85,927 150,941 200,957 240,970 290,958 380,947 450,947 490,956 530,958 560,947 640,898 700,864 800,807 820,797 860,791 878,790"), "#ffff00");
for (const [x, y] of close) el(g, "rect", { x: x - 1, y: Math.round(y) - 2, width: 3, height: 4, fill: "#00ffff" });
hline(g, 411.5, "#ff0000", 1443, 1840, 3);

// ---------- cycle MACD and CCI ----------
g = layer("macd", -2, -577);
const T2 = 550;
dayLines(g, 577, 771);
hline(g, 602.5, "#009000"); hline(g, 690.5, "#800080"); hline(g, 691.5, "#009000");
curve(g, points(T2, "5,652 30,643 60,618 100,575 140,508 187,420 225,335 260,260 300,188 332,155 355,150 380,157 420,191 480,265 536,342 605,417 690,485 740,518 770,533 805,538 840,527 890,514 915,511 1060,511 1090,503 1120,480 1187,420 1230,374 1260,355 1285,349 1310,347 1360,351 1430,352 1460,358 1485,369 1520,395 1550,425 1568,442",
  "0,445 45,510 80,553 110,585 140,604 170,617 220,619 270,627 310,629 340,617 365,594 395,551 420,500 455,420 500,335 545,270 590,222 660,161 700,136 735,124 755,130 785,155 810,184 840,221 870,254 900,282 940,309 970,319 1000,322 1030,331 1100,341 1125,349 1140,355"), "#008080");
curve(g, points(T2, "5,465 50,520 100,573 150,609 193,622 235,612 270,588 310,540 360,460 380,422 430,330 480,257 520,213 550,194 585,185 625,194 670,225 710,268 760,334 820,412 870,470 920,517 970,543 1010,554 1085,556 1160,541 1210,519 1290,467 1380,415 1450,375 1500,355 1540,347 1568,346",
  "0,346 40,350 90,370 150,418 200,467 260,530 310,577 345,603 395,626 430,632 465,629 500,610 550,565 600,495 645,425 700,325 750,245 800,190 840,150 880,128 915,121 965,131 1000,153 1050,190 1100,234 1140,270"), "#ffff00");
curve(g, points(T2, "5,628 20,642 45,656 70,658 98,657 125,642 155,612 180,575 210,517 255,415 280,353 320,275 350,213 380,176 415,151 445,145 475,150 500,162 540,192 580,243 640,330 690,417 740,496 785,537 830,557 870,563 930,564 1000,554 1060,536 1120,506 1170,470 1230,424 1290,383 1350,355 1400,333 1430,328 1490,328 1520,342 1545,358 1568,380",
  "0,380 45,427 110,505 170,567 240,621 290,658 325,667 360,657 400,620 450,550 500,465 545,370 600,285 650,205 690,145 735,95 770,82 810,90 850,120 890,157 960,225 1040,300 1100,343 1140,370"), "#ffff00", 1, "3 3");
const CY = "#00ffff", RD = "#ff0000";
[
  [CY, "5,345 14,325 22,331 30,333 38,330 46,337 54,333 62,325 72,310 80,301 90,295 110,287 130,268 145,247 162,234 168,210 180,185 193,162 200,156"],
  [RD, "200,156 209,151 217,155 226,151 234,155 242,154 250,155 258,160"],
  [CY, "258,160 266,168 275,169 283,177 290,181 299,178 307,277 317,268 325,297 332,311 340,304 348,309 356,306 364,292 373,304 387,319 398,304 406,306 413,324 430,328 438,320 456,319 464,309 471,318 480,320 487,346 496,352 520,349 528,331 536,342 544,335 552,298 560,271 569,268 577,257 585,265 593,274 601,235 610,260 618,268 634,302 642,347 650,358 660,386 668,391 683,394 691,376 707,381 716,397 725,409 742,393 757,403 765,415 773,403 781,368 800,366 815,352 830,408 846,424 854,441"],
  [RD, "854,441 863,438 871,452 880,479 887,503 896,515 905,467 912,461 920,474 936,454 952,405"],
  [CY, "952,405 961,400 977,373 985,387 1002,387 1018,367 1028,352 1036,354 1043,367 1059,358 1075,364 1083,361 1100,342 1108,327 1116,315 1127,328 1134,326 1141,309 1149,306 1157,272 1165,270 1174,288 1181,299 1189,268 1197,241 1206,295 1222,280 1231,297 1247,291 1256,311 1264,344 1280,352 1288,361 1296,340 1304,350 1320,355 1336,333 1350,327 1362,325 1370,313 1377,280 1385,235 1394,235 1402,275 1410,330 1418,390 1426,435"],
  [RD, "1426,435 1434,490 1450,559 1460,552 1475,526 1483,640 1491,663 1500,668 1508,630 1516,617 1524,603 1532,570 1540,556 1549,515 1557,487 1568,480"]
].forEach(([c, p]) => line(g, points(T2, p), c));
[
  [RD, "0,479 13,470 25,445 38,430 52,427"],
  [CY, "52,427 62,414 78,396 90,391 103,389 110,381 133,377 155,381 162,378 172,381 203,376 210,450"],
  [RD, "210,450 217,469 226,469 232,455 240,424"],
  [CY, "240,424 250,411 258,418 266,410 275,391 291,387 325,367 345,338 357,322 365,332 373,332 383,316 405,301 415,288 422,286 436,295 445,309 470,325 480,319 497,344 505,310 512,228 520,221 529,232 537,213 550,224 562,221 570,228 578,246 587,246 594,242 603,241 625,227 634,205 642,199 652,215 667,268 676,268 691,230 707,227 716,240 730,270 750,309 757,279 767,284 781,311 789,280 797,123"],
  [RD, "797,123 807,145 822,130 830,155"], [CY, "830,155 838,108"],
  [RD, "838,108 847,82 855,106 870,100 885,111 895,130 912,160"], [CY, "912,160 920,168 936,151"],
  [RD, "936,151 950,153"],
  [CY, "950,153 960,160 970,179 985,165 1002,190 1010,176 1018,187 1035,180 1050,190 1058,169 1068,164 1075,205 1083,238 1100,260 1108,240 1116,227 1125,263 1140,278"],
  ["#ff00ff", "847,82 1437,298"]
].forEach(([c, p]) => line(g, points(T2, "", p), c));

// ---------- velocity oscillator ----------
g = layer("velo", -2, -793);
const T3 = 770, GY = "#b0b0b0";
const smooth = points(T3, "5,433 60,390 120,348 170,298 205,235 240,182 270,142 290,126 308,118 322,142 350,190 390,255 430,322 455,337 487,338 510,355 545,367 560,364 600,332 640,301 665,312 695,341 740,412 775,457 790,457 825,436 860,446 888,463 905,482 950,529 970,527 1000,508 1030,465 1075,422 1110,410 1145,385 1190,347 1210,319 1240,304 1265,301 1300,325 1330,352 1370,371 1385,370 1400,344 1412,336 1430,348 1450,395 1487,465 1510,545 1533,625 1550,653 1568,653",
  "0,650 20,637 42,618 65,575 97,527 150,475 175,466 210,455 215,463 235,485 265,492 300,490 332,480 345,463 365,425 410,375 440,345 465,333 490,331 503,338 512,332 525,314 560,282 590,260 635,217 655,211 685,226 730,223 755,242 785,272 798,271 808,241 840,215 865,160 878,138 920,71 930,76 965,78 1000,108 1035,124 1076,124 1098,148 1108,158 1125,164 1140,182");
for (let x = 3, k = 0; x <= 1658; x += 5) {
  while (k < smooth.length - 2 && smooth[k + 1][0] < x) k++;
  const [a, b] = [smooth[k], smooth[k + 1]];
  const y = a[1] + (b[1] - a[1]) * (x - a[0]) / (b[0] - a[0]);
  el(g, "path", { d: `M${x + 0.5} 871.500V${y.toFixed(1)}`, stroke: "#232323" });
}
dayLines(g, 793, 988);
hline(g, 817.5, "#909090"); hline(g, 899.5, "#008080"); hline(g, 925.5, "#909090");
// gray inside the band, red above +120, cyan below -120
const tone = y => y < 817 ? RD : y > 925.5 ? CY : GY;
for (let i = 0; i < smooth.length - 1; i++) line(g, [smooth[i], smooth[i + 1]], tone((smooth[i][1] + smooth[i + 1][1]) / 2));
line(g, points(T3, "5,377 12,370 20,400 30,415 38,403 46,432 62,443 86,432 95,433 110,470 128,466 142,476 152,446 168,441 178,427 193,397 200,370 210,358 235,368 258,375 270,385 278,408 290,410 300,430 308,446 322,516 340,598 348,605 357,640 380,605 390,570 405,545 420,495 440,400 455,370 465,270 480,190 488,110 497,135 504,118 512,118 528,135 537,145 545,172 568,205 585,245 600,310 620,390 627,400 635,455 643,440 660,487 668,483 683,533 691,520 700,545 717,588 722,585 733,605 748,575 757,597 770,572 785,530 800,450 820,340 830,270 850,240 862,222 880,210 897,260 903,257 920,300 945,405 965,470 977,487 985,463 993,463 1000,440 1025,380 1043,290 1052,287 1060,262 1075,243 1085,250 1095,250 1110,285 1125,318 1133,365 1150,380 1165,415 1190,488 1197,463 1214,483 1230,470 1239,472 1248,450 1262,460 1280,460 1287,470 1295,458 1315,493 1325,484 1335,490 1353,485 1362,450 1372,447 1388,380 1405,340 1420,300 1428,302 1436,294 1446,315 1455,315 1475,330 1495,385 1512,440 1530,500 1548,573 1558,565 1568,535",
  "0,533 15,500 25,430 40,370 60,300 80,200 97,135 112,118 128,118 140,155 155,225 165,245 180,340 195,410 210,460 222,560 242,655 250,628 260,620 275,590 290,530 300,500 320,395 340,280 357,237 365,145 375,110 389,70 397,120 415,150 425,180 435,240 445,280 465,385 480,500 495,600 512,650 522,637 537,640 548,600 570,550 590,460 615,350 640,260 651,222 665,290 675,340 682,350 693,380 718,405 750,472 760,479 775,479 785,473 800,468 810,390 828,300 850,262 860,245 880,222 897,193 904,195 920,245 942,295 955,385 963,395 977,483 987,487 1010,560 1018,547 1027,571 1035,560 1043,565 1053,550 1075,450 1092,463 1100,437 1108,453 1117,447 1125,405 1132,433 1140,433"), "#008080");
curve(g, points(T3, "5,292 20,320 45,390 75,423 110,446 155,465 185,455 215,415 245,377 262,366 285,375 305,400 330,465 360,565 385,605 400,606 420,580 440,520 465,430 490,300 515,200 530,145 545,132 565,145 590,190 620,280 650,380 680,465 715,530 745,570 770,587 785,575 810,500 840,410 860,315 880,250 895,231 920,240 945,300 975,390 995,448 1010,458 1040,410 1065,330 1085,275 1105,260 1130,270 1160,325 1190,400 1215,455 1240,473 1270,467 1310,463 1340,475 1375,478 1395,462 1420,390 1440,332 1465,311 1485,314 1510,350 1540,430 1568,525",
  "0,525 15,538 30,520 50,430 80,310 110,200 130,145 147,136 165,160 190,240 215,360 240,490 262,580 280,612 295,595 325,520 350,390 375,260 400,150 420,124 435,130 460,200 480,300 500,420 520,550 540,620 555,627 575,605 600,520 635,380 660,300 680,282 700,300 730,370 765,435 790,470 805,471 825,430 850,350 880,260 905,222 920,220 940,235 965,290 990,390 1020,490 1050,545 1065,553 1085,520 1110,475 1140,440"), RD, 1, "5 4");
curve(g, points(T3, "5,270 30,330 65,395 100,428 140,457 165,465 195,452 225,410 255,376 272,370 300,385 325,425 350,495 380,580 405,605 425,590 455,510 485,390 510,260 535,165 550,138 565,140 595,185 630,270 665,395 700,475 740,553 780,584 800,570 825,500 850,400 880,280 905,234 925,243 955,310 985,405 1005,452 1020,458 1040,440 1065,365 1090,290 1123,262 1145,280 1185,370 1215,440 1245,472 1300,463 1340,470 1370,479 1392,466 1415,420 1445,345 1480,312 1505,325 1530,375 1568,490",
  "0,490 15,525 28,533 50,490 80,380 110,260 135,165 155,142 180,175 210,290 240,440 270,570 290,604 300,604 325,550 350,440 380,300 405,180 435,129 450,145 480,260 510,400 535,545 555,612 570,622 590,600 620,500 650,385 670,310 687,288 710,305 750,385 785,455 805,470 825,455 860,365 890,275 915,230 940,224 965,260 990,345 1020,450 1050,530 1075,548 1100,510 1140,453"), "#0000ff");
line(g, points(T3, "5,640 35,603 80,552 110,480 145,370 170,270 195,180 215,100 226,71 308,71 345,95 400,140 450,218 500,270 540,335 600,400 640,465 665,560 690,650 740,654 780,640 830,571 850,572 900,650 1070,655 1090,640 1120,520 1160,330 1190,190 1215,100 1240,71 1410,71 1426,95 1460,180 1490,265 1515,380 1540,540 1568,655",
  "0,655 285,655 320,636 365,540 410,390 440,240 470,140 490,75 505,71 730,71 750,95 790,152 815,170 840,173 865,171 935,140 975,97 1000,93 1030,103 1060,71 1100,71 1115,87 1130,100 1140,125"), "#c86400", 1, "3 3");
[[213, 801, CY], [873, 802, CY], [1419, 802, CY], [1643, 799, CY], [4, 983, RD], [478, 983, RD], [668, 981, RD], [1158, 982, RD]]
  .forEach(([cx, cy, fill]) => el(g, "circle", { cx, cy, r: 4, fill }));

// ---------- price axis ----------
g = layer("axis", -1840, -90);
const label = (y, t, cls = "") => el(g, "text", { x: 1848, y: y + 8, class: cls }, t);
const box = (y, h, fill) => el(g, "rect", { x: 1841, y, width: 77, height: h, fill });
const tick = y => el(g, "path", { d: `M1840 ${y + 0.5}h6`, stroke: "#fff" });
[148, 193, 238, 282, 327, 372, 417, 462, 507, 587, 602, 617, 632, 647, 662, 676, 691, 706, 721, 736, 751, 804, 819, 849, 871, 894, 917, 939, 962].forEach(tick);
[[148, "25000"], [193, "24500"], [238, "24000"], [282, "23500"], [327, "23000"], [372, "22500"], [418, "22000"], [462, "21500"], [507, "21000"],
 [617, "100.00"], [662, "-50.00"], [706, "-200.00"], [751, "-350.00"], [871, "0.00"], [916, "-100.00"], [961, "-200.00"]].forEach(([y, t]) => label(y, t));
box(321, 22, "#0000ff"); label(332, "22968", "on-light");
box(343, 23, "#6666ff"); label(354, "22730", "on-light");
box(366, 1, "#ffff00");
box(633, 23, "#00ffff"); label(644, "16.50", "on-light");
box(808, 22, "#808080"); label(818, "120.00", "on-light");
box(822, 23, "#a0a0a0"); label(833, "88.81", "on-light");
box(916, 23, "#808080"); label(927, "-120.00", "on-light");
el(g, "path", { d: "M1840.5 90V990M1840 558.500H1918M1840 774.500H1918", stroke: "#fff" });
hline(g, 411.5, "#ff0000", 1840, 1920, 3);

// ---------- time axis ----------
g = layer("times", -2, -990);
hline(g, 990.5, "#fff", 2, 1920);
[38, 108, 178, 248, 318, 388, 458, 528, 598, 668, 738, 808, 878, 948, 1018, 1158, 1228, 1298, 1368, 1438, 1508, 1578, 1648, 1718, 1788]
  .forEach(x => el(g, "path", { d: `M${x + 0.5} 991v4`, stroke: "#fff" }));
days.slice(1).forEach(x => el(g, "path", { d: `M${x} 991v9`, stroke: "#fff" }));
[[40, "10:45"], [110, "14:15"], [195, "2/28"], [250, "12:15"], [375, "3/01"], [460, "13:45"], [555, "3/02"], [670, "15:15"], [735, "3/03"], [810, "13:15"], [915, "3/04"], [1020, "14:45"], [1095, "3/07"], [1160, "12:45"], [1275, "3/08"], [1370, "14:15"], [1455, "3/09"], [1510, "12:15"], [1625, "3/10"], [1720, "14:30"], [1790, "18:00"]]
  .forEach(([x, t]) => el(g, "text", { x, y: 1014 }, t));
```
